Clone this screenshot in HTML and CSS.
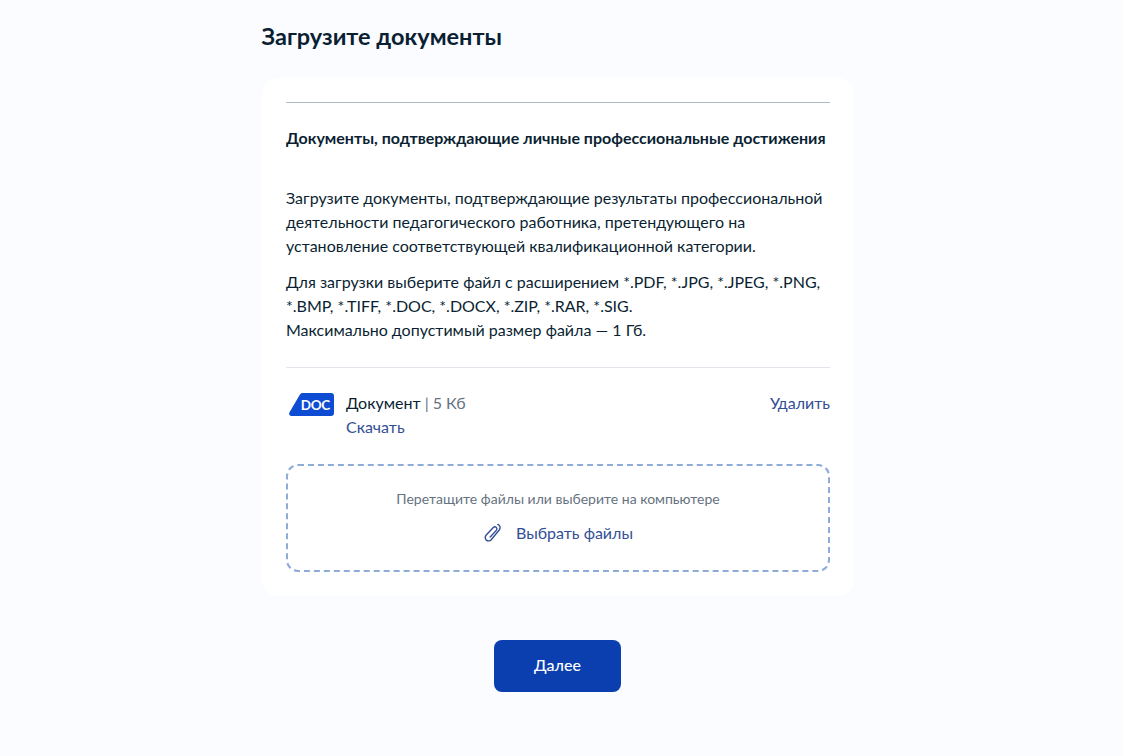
FILE: index.html
```html
<!DOCTYPE html>
<html lang="ru">
<head>
<meta charset="utf-8">
<title>Загрузите документы</title>
<link rel="stylesheet" href="styles.css">
</head>
<body>
<main class="page">
  <h1 class="title">Загрузите документы</h1>
  <section class="card">
    <h2 class="subtitle">Документы, подтверждающие личные профессиональные достижения</h2>
    <div class="desc">
      <p>Загрузите документы, подтверждающие результаты профессиональной деятельности педагогического работника, претендующего на установление соответствующей квалификационной категории.</p>
      <p>Для загрузки выберите файл с расширением *.PDF, *.JPG, *.JPEG, *.PNG, *.BMP, *.TIFF, *.DOC, *.DOCX, *.ZIP, *.RAR, *.SIG.<br>Максимально допустимый размер файла — 1 Гб.</p>
    </div>
    <div class="file">
      <svg class="doc" width="45" height="23" viewBox="0 0 45 23"><path d="M10.800 1.800C11.500.6 12.500 0 13.800 0H42a3 3 0 0 1 3 3v17a3 3 0 0 1-3 3H2.500C.6 23-.5 21.200.4 19.600z" fill="#0d4cd3"/><text x="26.300" y="17" text-anchor="middle" class="doc-text">DOC</text></svg>
      <div class="file-info">
        <div><span class="file-name">Документ</span><span class="file-size"> | 5 Кб</span></div>
        <a class="link" href="#">Скачать</a>
      </div>
      <a class="link" href="#">Удалить</a>
    </div>
    <div class="drop">
      <div class="drop-hint">Перетащите файлы или выберите на компьютере</div>
      <a class="pick link" href="#">
        <svg width="20" height="20" viewBox="1 0 20 20" fill="none" stroke="#324f96" stroke-width="1.400" stroke-linecap="round" stroke-linejoin="round"><path d="M15.800 1.400a3.400 3.400 0 0 1 1.600 5.300L9.200 16.700a3.400 3.400 0 0 1-5.200-4.400l7.300-7.900a2.100 2.100 0 0 1 3.200 2.700L8.200 14"/></svg>
        <span>Выбрать файлы</span>
      </a>
    </div>
  </section>
  <div class="actions"><button class="next" type="button">Далее</button></div>
</main>
</body>
</html>
```
FILE: styles.css
```css
* { box-sizing: border-box; }
html, body { margin: 0; height: 100%; }
body {
  background: #fafcff;
  font-family: Lato, "Noto Sans", "Liberation Sans", sans-serif;
  color: #0b1f33;
  overflow: hidden;
}
.page { width: 592px; margin-left: 262px; }
.title {
  margin: 0 0 0 -0.5px;
  padding-top: 20px;
  height: 78px;
  font-size: 23.500px;
  line-height: 32px;
  font-weight: 700;
}
.card {
  background: #fff;
  border-radius: 16px;
  padding: 24px;
  height: 518px;
}
.subtitle {
  margin: 0;
  border-top: 1px solid #b0b8c4;
  padding-top: 23px;
  height: 84px;
  font-size: 16px;
  line-height: 24px;
  font-weight: 700;
  white-space: nowrap;
}
.desc { font-size: 16px; line-height: 24px; padding-bottom: 13px; border-bottom: 1px solid #e1e5eb; }
.desc p { margin: 0 0 12px; }
.file {
  display: flex;
  align-items: flex-start;
  padding-top: 23px;
  font-size: 16px;
  line-height: 24px;
  height: 96px;
}
.doc { margin: 2px 12px 0 3px; flex: none; }
.doc-text { fill: #fff; font: 700 13.500px Lato, "Noto Sans", sans-serif; letter-spacing: -0.3px; }
.file-info { flex: 1; }
.file-size { color: #66727f; }
.link { color: #324f96; text-decoration: none; }
.drop {
  height: 108px;
  border: 2px dashed #8fabd9;
  border-radius: 12px;
  display: flex;
  flex-direction: column;
  align-items: center;
  padding-top: 23px;
}
.drop-hint { font-size: 14px; line-height: 20px; color: #66727f; }
.pick {
  display: flex;
  align-items: center;
  gap: 13px;
  margin-top: 12px;
  font-size: 16px;
  line-height: 24px;
}
.actions { display: flex; justify-content: center; padding-top: 44px; padding-right: 2px; }
.next {
  width: 127px;
  height: 52px;
  border: 0;
  border-radius: 8px;
  background: #0b3fb0;
  color: #fff;
  font: 500 16px Lato, "Noto Sans", sans-serif;
  padding: 0 0 3px 1px;
}
```
